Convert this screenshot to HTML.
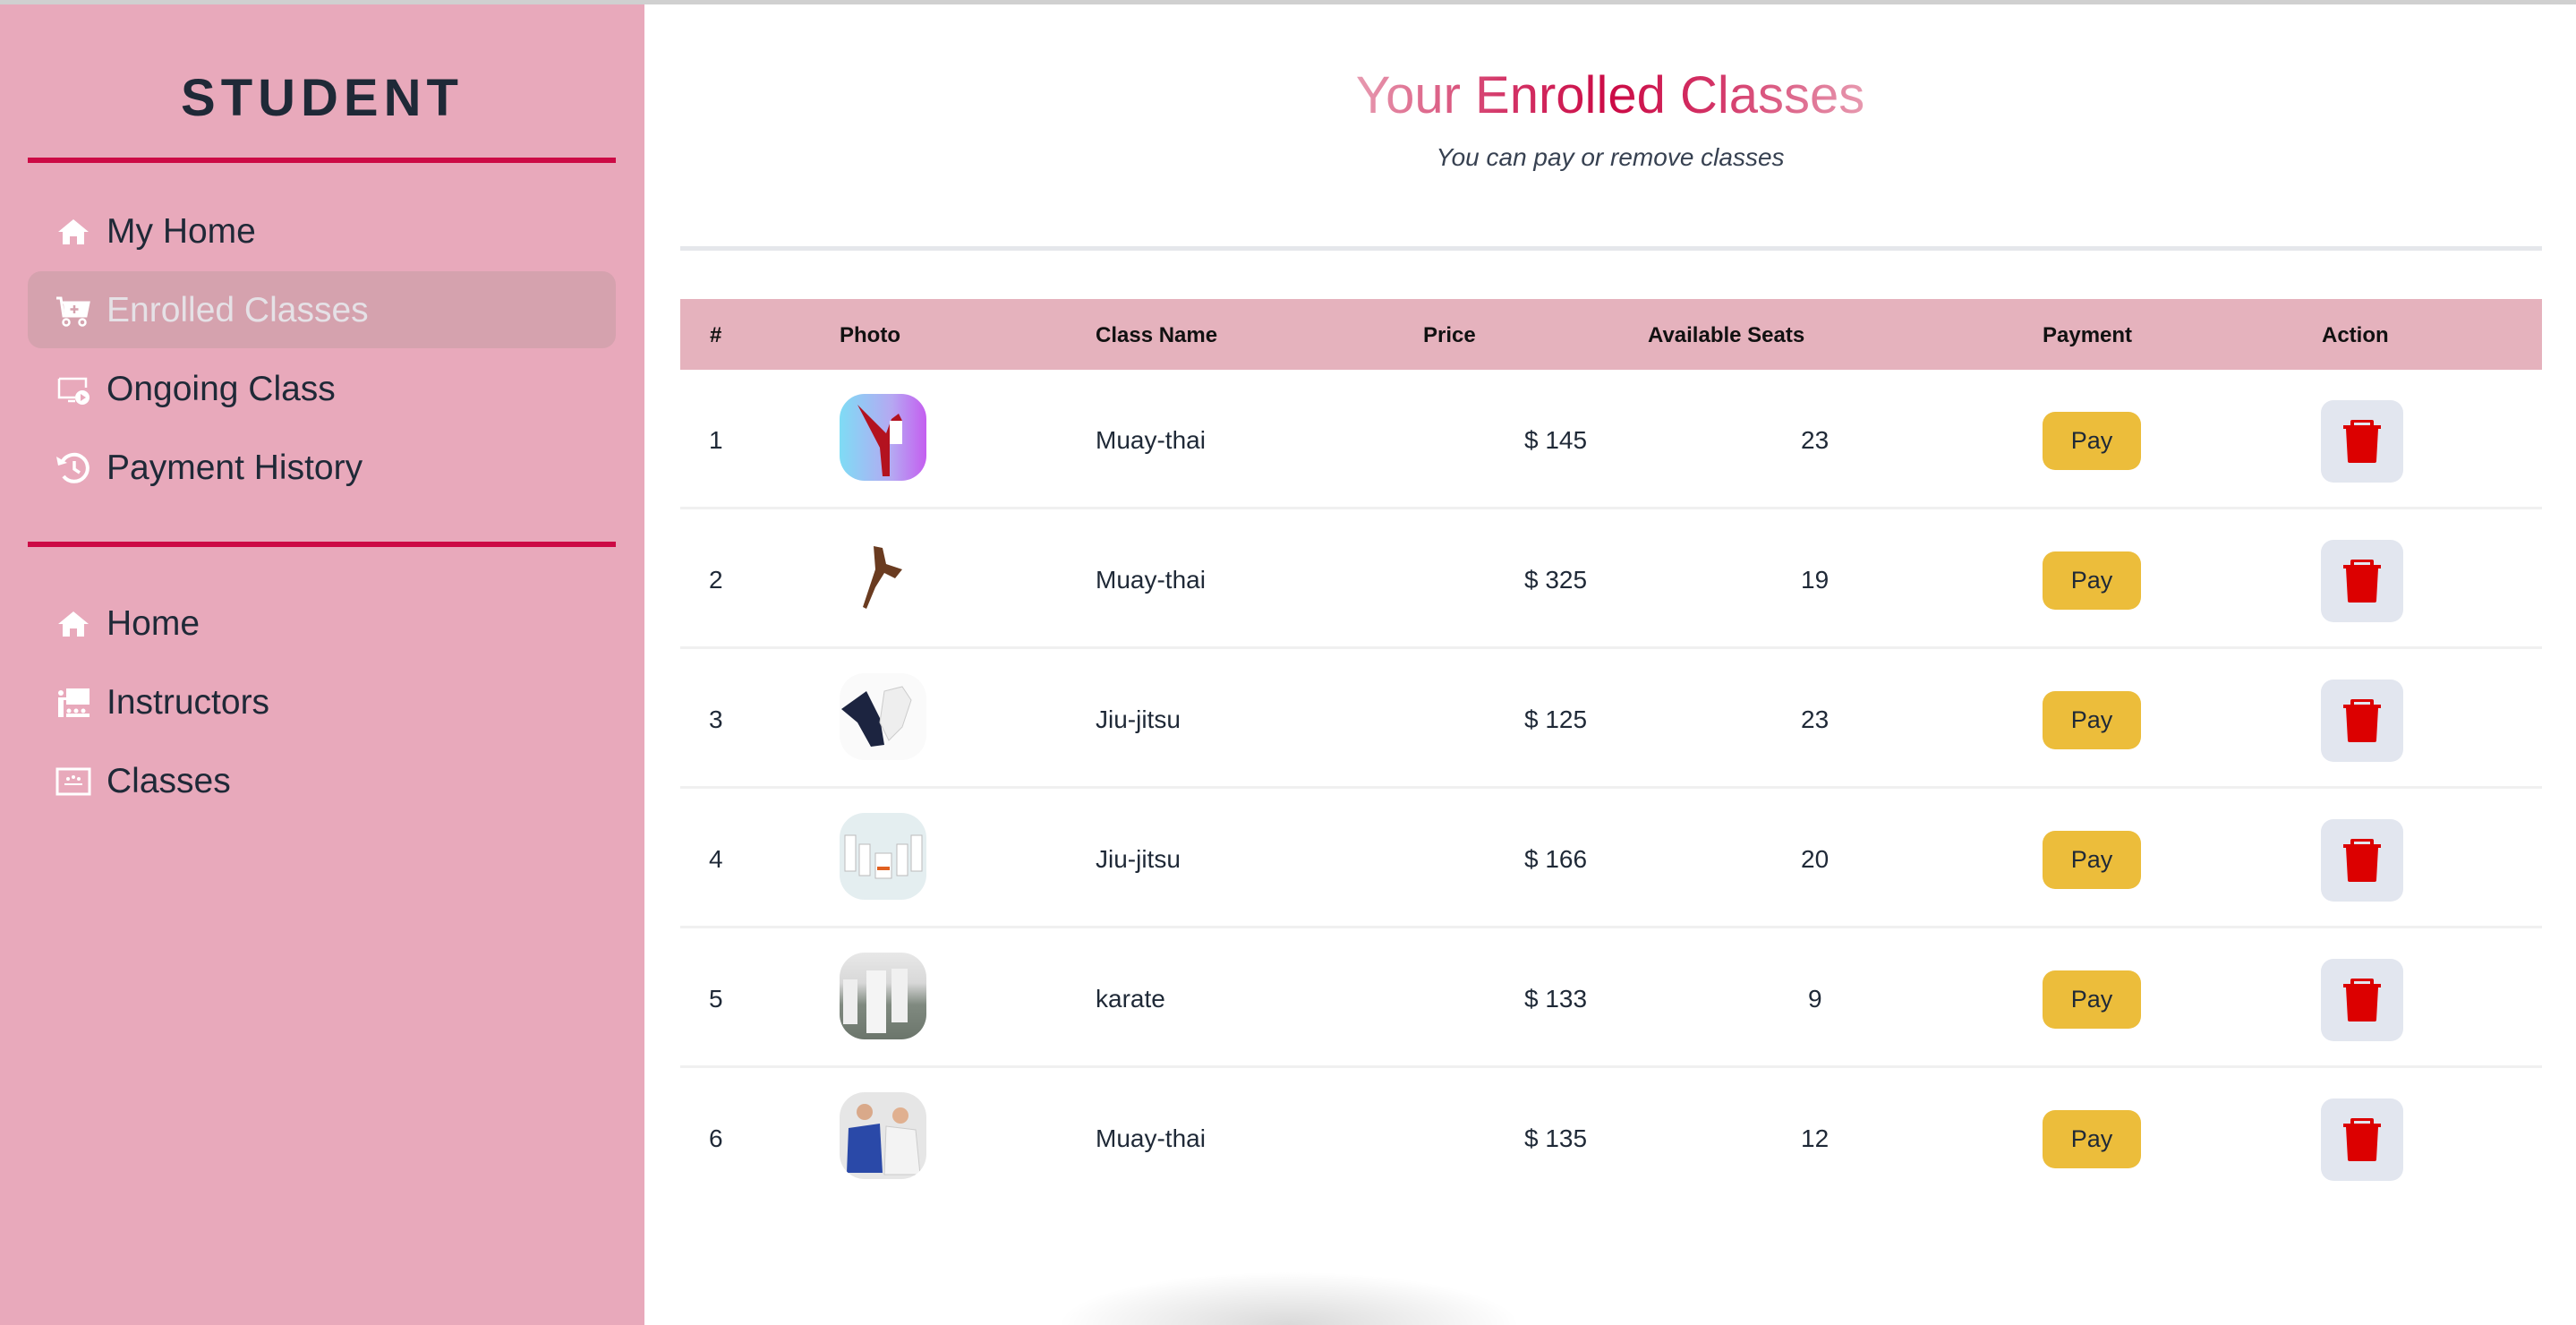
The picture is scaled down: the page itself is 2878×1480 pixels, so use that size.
<!DOCTYPE html>
<html style="overflow:hidden;width:2878px;height:1480px"><head><meta charset="utf-8">
<style>
*{margin:0;padding:0;box-sizing:border-box}
body{width:2878px;height:1480px;overflow:hidden;background:#fff;font-family:"Liberation Sans",Arial,sans-serif;color:#1f2937;position:relative}
.topline{position:absolute;left:0;top:0;width:2878px;height:5px;background:#d0d0d0}
.side{position:absolute;left:0;top:5px;width:720px;height:1475px;background:#e8a9bb}
.brand{position:absolute;left:0;width:720px;top:71px;text-align:center;font-size:58px;font-weight:bold;letter-spacing:6px;color:#1f2937}
.rl{position:absolute;left:31px;width:657px;height:6px;background:#cc0a45}
.hl{position:absolute;left:31px;top:298px;width:657px;height:86px;border-radius:15px;background:#d5a2ae}
.mi{position:absolute;left:119px;font-size:39px;color:#1f2937;line-height:48px}
.ic{position:absolute;left:62px;width:40px;height:40px}
.tw{position:absolute;left:720px;width:2158px;text-align:center}
.title{display:inline-block;font-size:58px;background:linear-gradient(90deg,#e79ab0 0%,#d33366 30%,#cb0a45 50%,#d33366 70%,#e79ab0 100%);-webkit-background-clip:text;background-clip:text;color:transparent;line-height:70px}
.sub{font-size:28px;font-style:italic;color:#374151}
.gl{position:absolute;left:760px;top:275px;width:2080px;height:5px;background:#e5e7eb}
.thead{position:absolute;left:760px;top:334px;width:2080px;height:79px;background:#e5b2bd}
.th{position:absolute;top:361px;font-size:24px;font-weight:bold;color:#111}
.row{position:absolute;left:760px;width:2080px;height:156px;border-bottom:3px solid #f0f0f0}
.c{position:absolute;font-size:28px;color:#1f2937;line-height:32px}
.ph{position:absolute;left:938px;width:97px;height:97px;border-radius:28px;overflow:hidden}
.pay{position:absolute;left:2282px;width:110px;height:65px;border-radius:14px;background:#ecbd3b;font-size:27px;text-align:center;line-height:65px;color:#1f2937}
.del{position:absolute;left:2593px;width:92px;height:92px;border-radius:14px;background:#e2e6ef}
.del svg{position:absolute;left:23px;top:22px}
.shadow{position:absolute;left:1180px;top:1420px;width:520px;height:60px;background:radial-gradient(ellipse at 50% 100%,rgba(0,0,0,.15),rgba(0,0,0,0) 70%)}
</style></head><body>
<div class="topline"></div>
<div class="side">
  <div class="brand">STUDENT</div>
  <div class="rl" style="top:171px"></div>
  <div class="hl"></div>
  <svg class="ic" style="top:234px" viewBox="0 0 40 40"><path d="M20 6 L37 20 H32 V34 H24 V25 H16 V34 H8 V20 H3 Z" fill="#fff"/></svg>
  <div class="mi" style="top:230px">My Home</div>
  <svg class="ic" style="top:322px" viewBox="0 0 40 40"><path d="M1 6 H6 L9 26 H34 L37 11 H8" fill="none" stroke="#fff" stroke-width="3"/><path d="M9 12 H36 L33 25 H10 Z" fill="#fff"/><path d="M21 14 V23 M16.5 18.5 H25.5" stroke="#d5a2ae" stroke-width="2.5"/><circle cx="12" cy="33" r="3.5" fill="none" stroke="#fff" stroke-width="2.5"/><circle cx="30" cy="33" r="3.5" fill="none" stroke="#fff" stroke-width="2.5"/></svg>
  <div class="mi" style="top:318px;color:#e5e1e6">Enrolled Classes</div>
  <svg class="ic" style="top:410px" viewBox="0 0 40 40"><path d="M4 8 H34 V18 M4 8 V29 H22" fill="none" stroke="#fff" stroke-width="2.5"/><path d="M14 33 H22" stroke="#fff" stroke-width="2.5"/><circle cx="30" cy="29" r="8" fill="#fff"/><path d="M28 25 L34 29 L28 33 Z" fill="#e8a9bb"/></svg>
  <div class="mi" style="top:406px">Ongoing Class</div>
  <svg class="ic" style="top:498px" viewBox="0 0 40 40"><path d="M7 14 A15 15 0 1 1 9 29" fill="none" stroke="#fff" stroke-width="4"/><path d="M1 7 L3 17 L13 14 Z" fill="#fff"/><path d="M21 12 V21 L27 25" fill="none" stroke="#fff" stroke-width="3.5"/></svg>
  <div class="mi" style="top:494px">Payment History</div>
  <div class="rl" style="top:600px"></div>
  <svg class="ic" style="top:672px" viewBox="0 0 40 40"><path d="M20 6 L37 20 H32 V34 H24 V25 H16 V34 H8 V20 H3 Z" fill="#fff"/></svg>
  <div class="mi" style="top:668px">Home</div>
  <svg class="ic" style="top:760px" viewBox="0 0 40 40"><rect x="12" y="4" width="26" height="18" fill="#fff"/><circle cx="6" cy="9" r="3" fill="#fff"/><path d="M3 14 H16 V17 H9 V36 H3 Z" fill="#fff"/><circle cx="15" cy="29" r="2.5" fill="#fff"/><circle cx="23" cy="29" r="2.5" fill="#fff"/><circle cx="31" cy="29" r="2.5" fill="#fff"/><rect x="12" y="32" width="26" height="4" fill="#fff"/></svg>
  <div class="mi" style="top:756px">Instructors</div>
  <svg class="ic" style="top:848px" viewBox="0 0 40 40"><rect x="2" y="6" width="36" height="28" fill="none" stroke="#fff" stroke-width="3"/><circle cx="14" cy="17" r="2" fill="#fff"/><circle cx="20" cy="15" r="2" fill="#fff"/><circle cx="26" cy="17" r="2" fill="#fff"/><path d="M10 24 H30 V22 H10 Z" fill="#fff"/></svg>
  <div class="mi" style="top:844px">Classes</div>
</div>

<div class="tw" style="top:72px"><span class="title">Your Enrolled Classes</span></div>
<div class="tw sub" style="top:160px">You can pay or remove classes</div>
<div class="gl"></div>
<div class="thead"></div>
<div class="th" style="left:793px">#</div>
<div class="th" style="left:938px">Photo</div>
<div class="th" style="left:1224px">Class Name</div>
<div class="th" style="left:1590px">Price</div>
<div class="th" style="left:1841px">Available Seats</div>
<div class="th" style="left:2282px">Payment</div>
<div class="th" style="left:2594px">Action</div>

<div class="row" style="top:413px"></div>
<div class="row" style="top:569px"></div>
<div class="row" style="top:725px"></div>
<div class="row" style="top:881px"></div>
<div class="row" style="top:1037px"></div>

<div class="c" style="left:792px;top:476px">1</div>
<div class="ph" style="top:440px;background:linear-gradient(90deg,#7fdcf5,#b5a8f2 60%,#c45ef0)"><svg width="97" height="97"><path d="M20 12 L45 60 L48 92 L56 92 L56 55 L62 40 L70 30 L66 22 L58 28 L52 44 Z" fill="#b3121f"/><rect x="56" y="30" width="14" height="26" fill="#fff"/></svg></div>
<div class="c" style="left:1224px;top:476px">Muay-thai</div>
<div class="c" style="left:1703px;top:476px">$ 145</div>
<div class="c" style="left:2012px;top:476px">23</div>
<div class="pay" style="top:460px">Pay</div>
<div class="del" style="top:447px"><svg width="46" height="48" viewBox="0 0 46 48"><path d="M10 6 V2 Q10 0 12 0 H34 Q36 0 36 2 V6 H44 V10 H41 L39 46 Q39 48 37 48 H9 Q7 48 7 46 L5 10 H2 V6 Z M14 3 V6 H32 V3 Z" fill="#dc0000"/></svg></div>

<div class="c" style="left:792px;top:632px">2</div>
<div class="ph" style="top:596px;background:#fff"><svg width="97" height="97"><path d="M38 14 L48 16 L52 34 L70 40 L62 50 L50 44 L40 60 L30 84 L26 82 L34 58 L40 40 Z" fill="#6a3b20"/></svg></div>
<div class="c" style="left:1224px;top:632px">Muay-thai</div>
<div class="c" style="left:1703px;top:632px">$ 325</div>
<div class="c" style="left:2012px;top:632px">19</div>
<div class="pay" style="top:616px">Pay</div>
<div class="del" style="top:603px"><svg width="46" height="48" viewBox="0 0 46 48"><path d="M10 6 V2 Q10 0 12 0 H34 Q36 0 36 2 V6 H44 V10 H41 L39 46 Q39 48 37 48 H9 Q7 48 7 46 L5 10 H2 V6 Z M14 3 V6 H32 V3 Z" fill="#dc0000"/></svg></div>

<div class="c" style="left:792px;top:788px">3</div>
<div class="ph" style="top:752px;background:#fafafa"><svg width="97" height="97"><path d="M2 40 L30 20 L45 50 L50 80 L35 82 L20 55 Z" fill="#1c2440"/><path d="M50 20 L70 15 L80 30 L70 60 L55 75 L45 55 Z" fill="#eee" stroke="#ccc"/></svg></div>
<div class="c" style="left:1224px;top:788px">Jiu-jitsu</div>
<div class="c" style="left:1703px;top:788px">$ 125</div>
<div class="c" style="left:2012px;top:788px">23</div>
<div class="pay" style="top:772px">Pay</div>
<div class="del" style="top:759px"><svg width="46" height="48" viewBox="0 0 46 48"><path d="M10 6 V2 Q10 0 12 0 H34 Q36 0 36 2 V6 H44 V10 H41 L39 46 Q39 48 37 48 H9 Q7 48 7 46 L5 10 H2 V6 Z M14 3 V6 H32 V3 Z" fill="#dc0000"/></svg></div>

<div class="c" style="left:792px;top:944px">4</div>
<div class="ph" style="top:908px;background:#e4eef0"><svg width="97" height="97"><g fill="#fff" stroke="#bbb"><rect x="6" y="25" width="12" height="40"/><rect x="22" y="35" width="12" height="35"/><rect x="40" y="45" width="18" height="28"/><rect x="64" y="35" width="12" height="35"/><rect x="80" y="25" width="12" height="40"/></g><rect x="42" y="60" width="14" height="4" fill="#e06020"/></svg></div>
<div class="c" style="left:1224px;top:944px">Jiu-jitsu</div>
<div class="c" style="left:1703px;top:944px">$ 166</div>
<div class="c" style="left:2012px;top:944px">20</div>
<div class="pay" style="top:928px">Pay</div>
<div class="del" style="top:915px"><svg width="46" height="48" viewBox="0 0 46 48"><path d="M10 6 V2 Q10 0 12 0 H34 Q36 0 36 2 V6 H44 V10 H41 L39 46 Q39 48 37 48 H9 Q7 48 7 46 L5 10 H2 V6 Z M14 3 V6 H32 V3 Z" fill="#dc0000"/></svg></div>

<div class="c" style="left:792px;top:1100px">5</div>
<div class="ph" style="top:1064px;background:linear-gradient(180deg,#e8e8e8 0%,#d8d8d8 35%,#808a80 60%,#6b756b 100%)"><svg width="97" height="97"><rect x="30" y="20" width="22" height="70" fill="#f4f4f4"/><rect x="58" y="18" width="18" height="60" fill="#f0f0f0"/><rect x="4" y="30" width="16" height="50" fill="#eee"/></svg></div>
<div class="c" style="left:1224px;top:1100px">karate</div>
<div class="c" style="left:1703px;top:1100px">$ 133</div>
<div class="c" style="left:2020px;top:1100px">9</div>
<div class="pay" style="top:1084px">Pay</div>
<div class="del" style="top:1071px"><svg width="46" height="48" viewBox="0 0 46 48"><path d="M10 6 V2 Q10 0 12 0 H34 Q36 0 36 2 V6 H44 V10 H41 L39 46 Q39 48 37 48 H9 Q7 48 7 46 L5 10 H2 V6 Z M14 3 V6 H32 V3 Z" fill="#dc0000"/></svg></div>

<div class="c" style="left:792px;top:1256px">6</div>
<div class="ph" style="top:1220px;background:#e6e6e6"><svg width="97" height="97"><path d="M10 40 L45 35 L48 90 L8 90 Z" fill="#2a49a8"/><path d="M52 38 L85 42 L90 92 L50 92 Z" fill="#f3f3f3" stroke="#ccc"/><circle cx="28" cy="22" r="9" fill="#d9a98a"/><circle cx="68" cy="26" r="9" fill="#e0b090"/></svg></div>
<div class="c" style="left:1224px;top:1256px">Muay-thai</div>
<div class="c" style="left:1703px;top:1256px">$ 135</div>
<div class="c" style="left:2012px;top:1256px">12</div>
<div class="pay" style="top:1240px">Pay</div>
<div class="del" style="top:1227px"><svg width="46" height="48" viewBox="0 0 46 48"><path d="M10 6 V2 Q10 0 12 0 H34 Q36 0 36 2 V6 H44 V10 H41 L39 46 Q39 48 37 48 H9 Q7 48 7 46 L5 10 H2 V6 Z M14 3 V6 H32 V3 Z" fill="#dc0000"/></svg></div>

<div class="shadow"></div>
</body></html>
